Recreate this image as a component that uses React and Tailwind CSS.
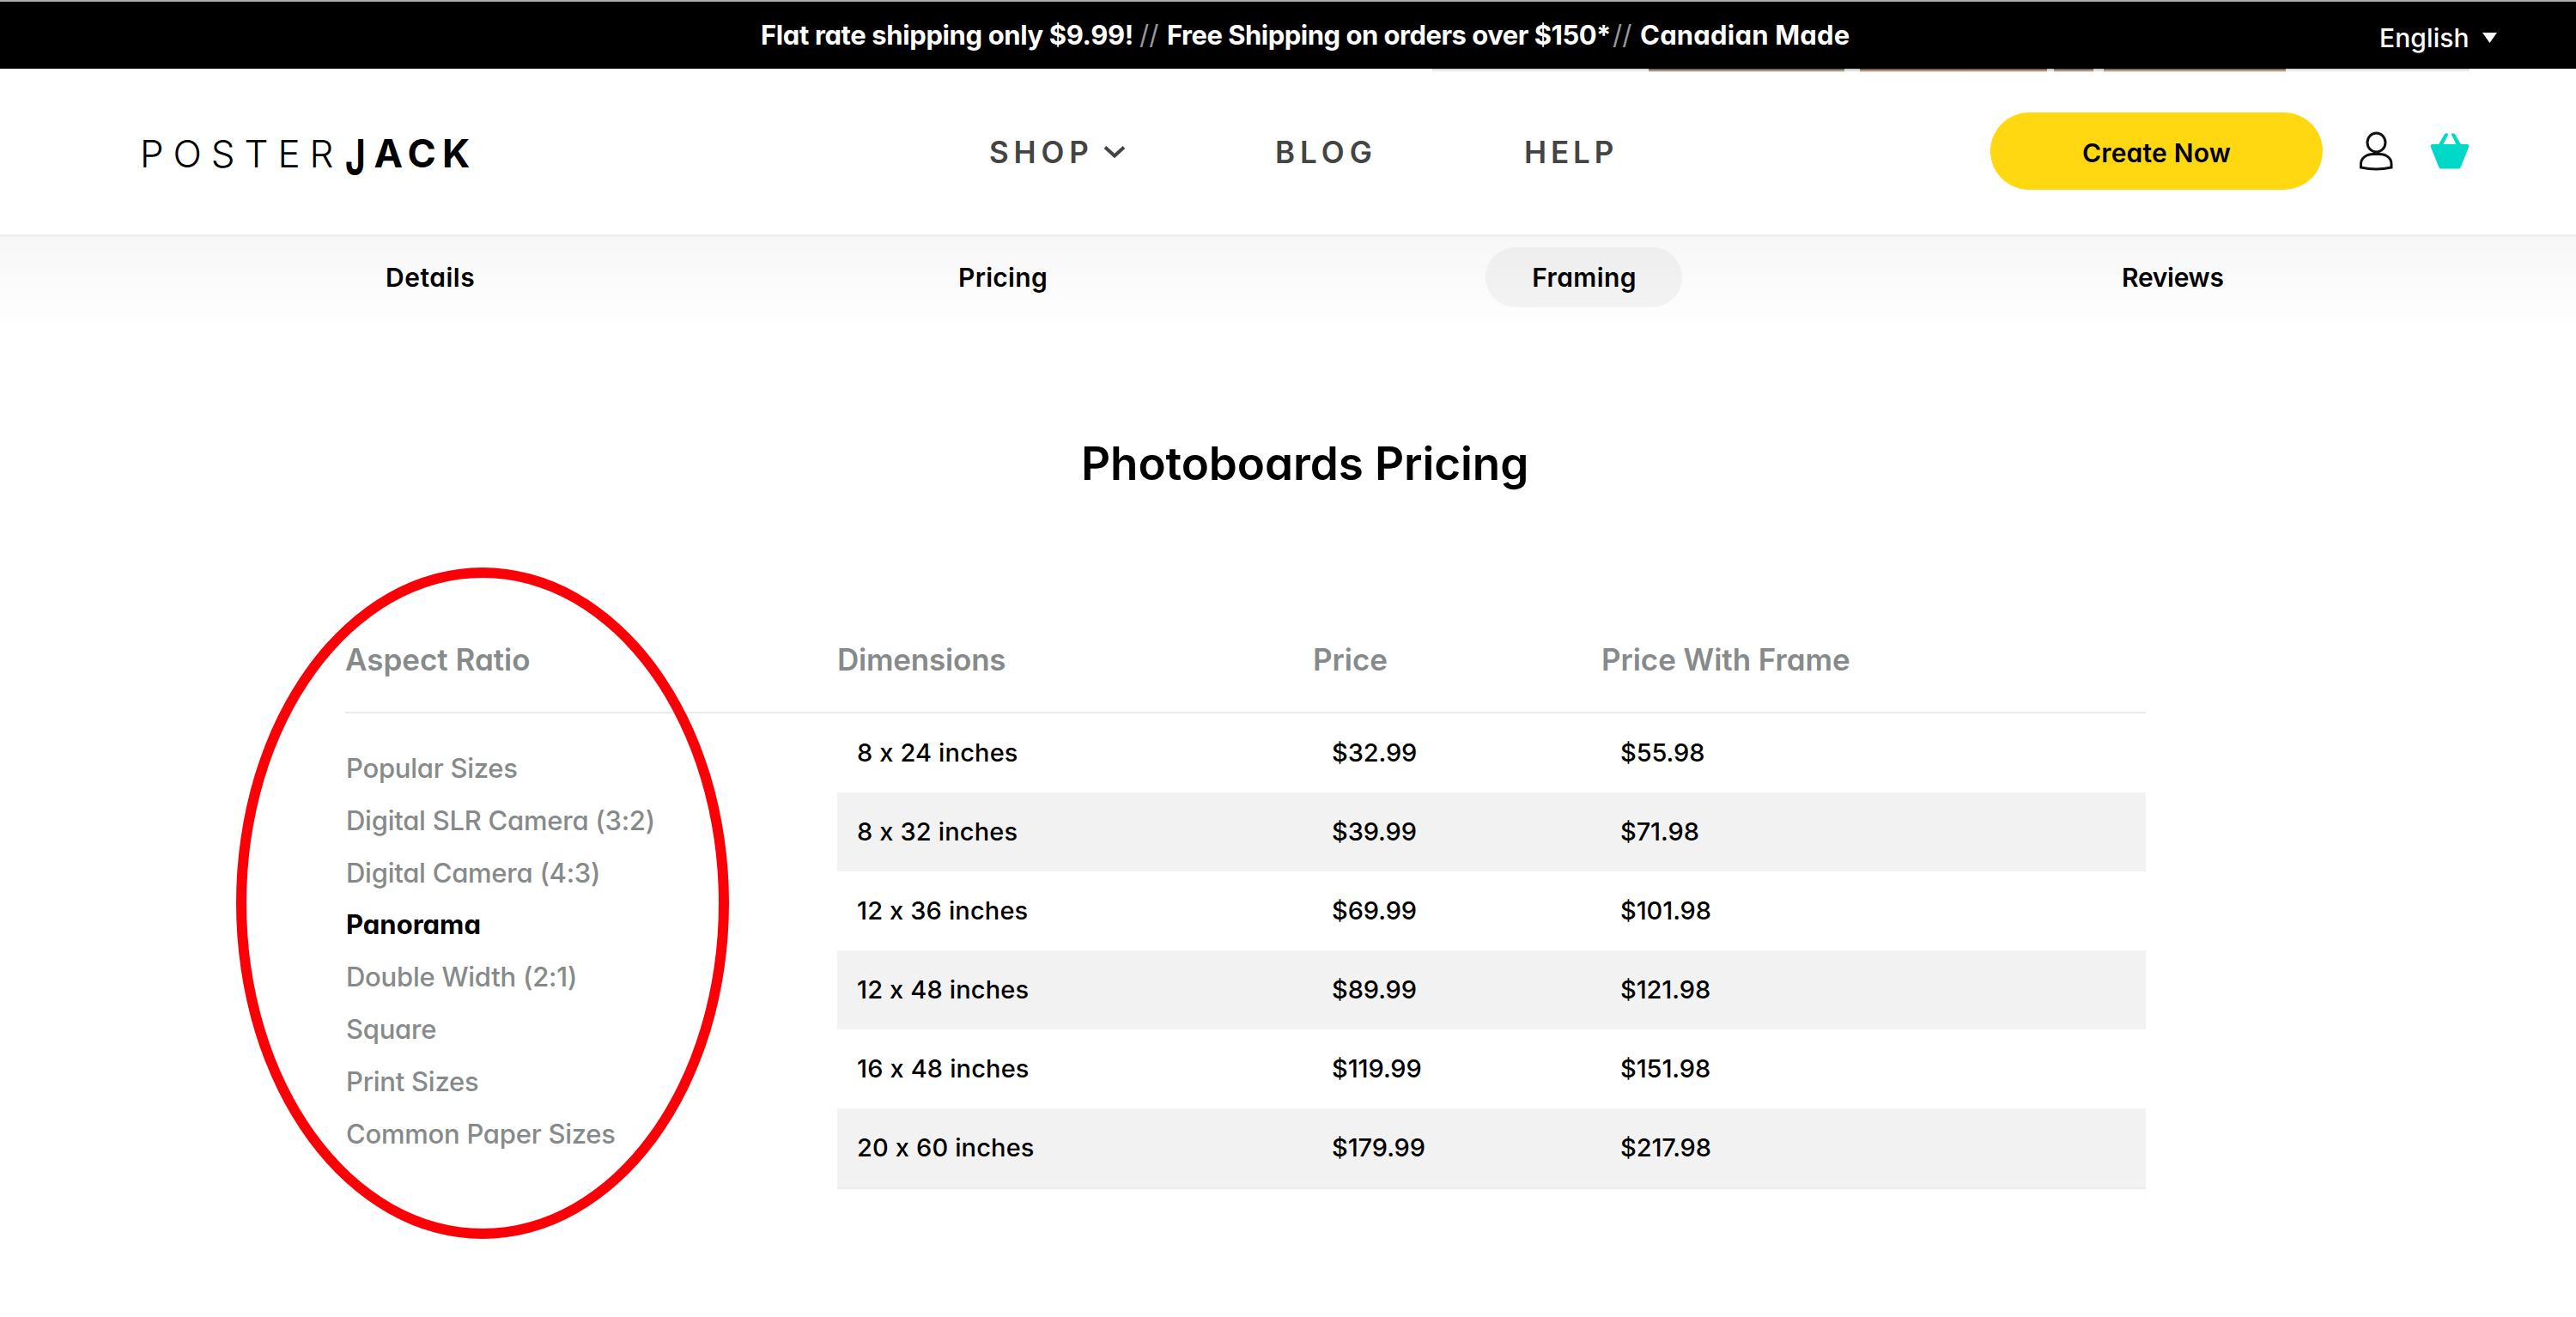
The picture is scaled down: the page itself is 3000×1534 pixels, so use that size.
import React from "react";

const RATIOS = [
  { label: "Popular Sizes" },
  { label: "Digital SLR Camera (3:2)" },
  { label: "Digital Camera (4:3)" },
  { label: "Panorama", active: true },
  { label: "Double Width (2:1)" },
  { label: "Square" },
  { label: "Print Sizes" },
  { label: "Common Paper Sizes" },
];

const ROWS = [
  ["8 x 24 inches", "$32.99", "$55.98"],
  ["8 x 32 inches", "$39.99", "$71.98"],
  ["12 x 36 inches", "$69.99", "$101.98"],
  ["12 x 48 inches", "$89.99", "$121.98"],
  ["16 x 48 inches", "$119.99", "$151.98"],
  ["20 x 60 inches", "$179.99", "$217.98"],
];

function AnnouncementBar() {
  return (
    <div className="flex h-[80px] border-t-2 border-[#a9adb0] bg-black pl-[886px] leading-[77px] whitespace-nowrap text-white">
      <div className="flex w-[1885px] text-[31px] font-bold">
        <span className="w-[441px] tracking-[-0.38px]">Flat rate shipping only $9.99!</span>
        <span className="w-[32px] font-normal text-[#999]">//</span>
        <span className="w-[519px] tracking-[-0.5px]">Free Shipping on orders over $150*</span>
        <span className="w-[32px] font-normal text-[#999]">//</span>
        <span className="tracking-[0.2px]">Canadian Made</span>
      </div>
      <div className="flex items-center gap-[15px] pt-[5px] text-[30px] font-medium">
        <span className="leading-[76px] tracking-[0.1px]">English</span>
        <svg className="h-[12px] w-[17px]" viewBox="0 0 17 12">
          <path d="M0 0H17L8.5 12Z" fill="#fff" />
        </svg>
      </div>
    </div>
  );
}

function HeroEdge() {
  return (
    <div className="flex h-[4px] pl-[1668px]">
      <div className="w-[252px] bg-linear-to-b from-[#cfcfcf] to-white" />
      <div className="w-[228px] bg-linear-to-b from-[#4d4238] to-[#f6efe4]" />
      <div className="w-[18px] bg-linear-to-b from-[#bbb] to-white" />
      <div className="w-[218px] bg-linear-to-b from-[#523a2a] to-[#f6ebdc]" />
      <div className="w-[8px] bg-linear-to-b from-[#bbb] to-white" />
      <div className="w-[46px] bg-linear-to-b from-[#4d4238] to-[#f6efe4]" />
      <div className="w-[12px] bg-linear-to-b from-[#bbb] to-white" />
      <div className="w-[212px] bg-linear-to-b from-[#5d4a38] to-[#f9f0e2]" />
      <div className="w-[214px] bg-linear-to-b from-[#cfcfcf] to-white" />
    </div>
  );
}

function Header() {
  return (
    <header className="flex h-[189px] items-center pb-[6px] pl-[163px] text-[35px] font-semibold text-[#444]">
      <a className="flex w-[989px] items-baseline pt-[6px] leading-[46px] text-black">
        <span className="w-[239px] text-[44px] font-[350] tracking-[10.9px]">POSTER</span>
        <span className="flex text-[45px] font-bold tracking-[7.2px]">
          <span className="inline-block origin-[0_7px] scale-x-[0.9] scale-y-[1.26]">J</span>ACK
        </span>
      </a>
      <a className="flex w-[333px] items-center gap-[11px] pt-[3px] tracking-[5.8px]">
        SHOP
        <svg className="h-[16px] w-[26px]" viewBox="0 0 26 16" fill="none" stroke="#444" strokeWidth="4">
          <path d="M2 2.5L13 12.5L24 2.5" />
        </svg>
      </a>
      <a className="w-[290px] pt-[3px] tracking-[6px]">BLOG</a>
      <a className="w-[543px] pt-[3px] tracking-[4.9px]">HELP</a>
      <button className="h-[90px] w-[387px] rounded-full bg-[#ffd811] pt-[5px] text-[30px] font-semibold tracking-[0.2px] text-black">
        Create Now
      </button>
      <svg className="ml-[42px] h-[46px] w-[42px]" viewBox="0 0 42 46" fill="none" stroke="#111" strokeWidth="3">
        <ellipse cx="20.5" cy="13" rx="10.5" ry="11" />
        <path d="M2.5 42V38C2.5 31 9 26.5 17 26.5H24C32 26.5 38 31 38 38V42C26 44.5 14 44.5 2.5 42Z" />
      </svg>
      <svg className="ml-[41px] h-[42px] w-[46px]" viewBox="0 0 46 42" fill="#00d9c8">
        <path d="M3 13H43C45 13 46 14.5 45 16.5L36 39C35 41 34.5 41.5 33 41.5H13C11.5 41.5 11 41 10 39L1 16.5C0 14.5 1 13 3 13Z" />
        <path d="M9 15L17 1C18.5 0 20.5 0 21.5 1L14.5 15Z" />
        <path d="M37 15L29 1C27.5 0 25.5 0 24.5 1L31.5 15Z" />
      </svg>
    </header>
  );
}

function SectionTabs() {
  return (
    <nav className="flex h-[112px] border-t-[3px] border-[#f0f0f0] bg-linear-to-b from-[#f7f7f7] to-white pt-[12px] pl-[393px] text-[30px] leading-[70px] font-semibold text-black">
      <a className="w-[667px] pl-[56px] tracking-[0.5px]">Details</a>
      <a className="w-[670px] pl-[56px] tracking-[0.3px]">Pricing</a>
      <div className="w-[686px]">
        <a className="flex h-[70px] w-[229px] justify-center rounded-full bg-black/4 pl-[1px] tracking-[0.4px]">Framing</a>
      </div>
      <a className="pl-[55px] tracking-[-0.3px]">Reviews</a>
    </nav>
  );
}

function Pricing() {
  return (
    <main className="relative pt-[120px]">
      <h1 className="pl-[1259px] text-[53px] leading-[70px] font-semibold tracking-[-0.1px] text-black">
        Photoboards Pricing
      </h1>
      <div className="mt-[154px] ml-[402px] w-[2097px]">
        <div className="flex h-[102px] border-b-2 border-[#ebebeb] text-[35px] leading-[78px] font-semibold text-[#868a8a]">
          <div className="w-[573px]">Aspect Ratio</div>
          <div className="w-[554px] tracking-[-0.2px]">Dimensions</div>
          <div className="w-[336px]">Price</div>
          <div className="tracking-[-0.05px]">Price With Frame</div>
        </div>
        <div className="flex">
          <ul className="w-[573px] pt-[34px] pl-[1px] text-[31px] leading-[60.8px] font-[460] text-[#868a8a]">
            {RATIOS.map((r) => (
              <li key={r.label} className={r.active ? "font-bold text-black" : "tracking-[-0.25px]"}>
                {r.label}
              </li>
            ))}
          </ul>
          <div className="flex-1 border-b-2 border-[#ebebeb] text-[29px] leading-[92px] font-[450] text-black">
            {ROWS.map(([size, price, framed]) => (
              <div key={size} className="flex h-[92px] pl-[23px] even:bg-[#f2f2f2]">
                <div className="w-[553px] tracking-[0.15px]">{size}</div>
                <div className="w-[336px] tracking-[-0.1px]">{price}</div>
                <div className="tracking-[-0.1px]">{framed}</div>
              </div>
            ))}
          </div>
        </div>
      </div>
      <div className="absolute top-[276px] left-[275px] h-[782px] w-[574px] rounded-[50%] border-[12px] border-[#fb0006]" />
    </main>
  );
}

export default function App() {
  return (
    <div className="h-[1534px] w-[3000px] overflow-hidden bg-white font-['Inter','Open_Sans',sans-serif] [font-feature-settings:'cv11','calt'_0]">
      <AnnouncementBar />
      <HeroEdge />
      <Header />
      <SectionTabs />
      <Pricing />
    </div>
  );
}
